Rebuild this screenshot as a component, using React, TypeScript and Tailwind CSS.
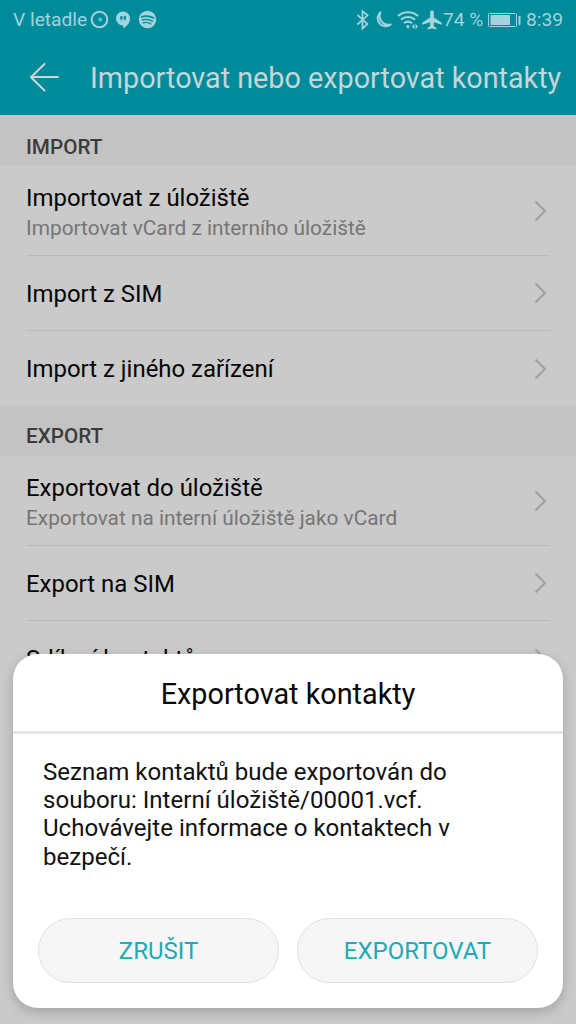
import { ReactNode } from "react";

function Chevron() {
  return (
    <svg className="mr-[2px] h-[22px] w-[14px] shrink-0" viewBox="0 0 14 22" fill="none" stroke="#a0a0a0" strokeWidth="2">
      <path d="M1.5 1.5 11 11 1.5 20.5" />
    </svg>
  );
}

function Section({ children, className }: { children: ReactNode; className: string }) {
  return (
    <h2 className={`shrink-0 bg-[#c3c3c3] pl-[26px] text-[20.7px] leading-[24px] font-medium text-[#3b3b3b] ${className}`}>
      {children}
    </h2>
  );
}

function Row({ title, detail, last }: { title: string; detail?: string; last?: boolean }) {
  return (
    <div
      className={`mx-[26px] flex shrink-0 items-center justify-between ${detail ? "h-[90px]" : "h-[75px]"} ${last ? "" : "border-b border-[#b9b9b9]"}`}
    >
      <div className={`whitespace-nowrap ${detail ? "pt-[4px]" : last ? "" : "pt-[2px]"}`}>
        <div className="text-[23.95px] leading-[30px] text-[#050505]">{title}</div>
        {detail && <div className="text-[20.83px] leading-[30px] text-[#757575]">{detail}</div>}
      </div>
      <Chevron />
    </div>
  );
}

function StatusBar() {
  return (
    <div className="flex h-[40px] items-center justify-between pr-[13px] pl-[13px] text-[19.2px] leading-[40px] whitespace-nowrap text-[#a3d3dc]">
      <div className="flex items-center">
        <span className="w-[77px]">V letadle</span>
        <svg className="h-[20px] w-[68px]" viewBox="0 0 68 20">
          <circle cx="9.5" cy="9.5" r="7.8" fill="none" stroke="currentColor" strokeWidth="2" />
          <circle cx="10.2" cy="9.5" r="2" fill="#52c7da" />
          <path d="M33 1.5a7 7 0 0 0 0 14v2.8c4.5-2.1 7-5.8 7-9.8a7 7 0 0 0-7-7Z" fill="currentColor" />
          <path d="M30.2 6.2h2.3v2.8l-1 1.6h-1l.7-1.7h-1zm3.5 0h2.3v2.8l-1 1.6h-1l.7-1.7h-1z" fill="#008b9b" />
          <circle cx="57.5" cy="9.5" r="8.7" fill="currentColor" />
          <g fill="none" stroke="#008b9b" strokeLinecap="round">
            <path d="M51.6 6.8c4-1.2 8.3-.8 12 1.2" strokeWidth="1.7" />
            <path d="M52.3 9.9c3.5-1 7-.5 10.2 1.2" strokeWidth="1.4" />
            <path d="M52.9 12.8c3-.7 5.8-.3 8.3 1.1" strokeWidth="1.2" />
          </g>
        </svg>
      </div>
      <div className="flex items-center">
        <svg className="h-[24px] w-[88px]" viewBox="0 0 88 24" fill="none" stroke="currentColor" strokeWidth="1.7">
          <path d="m2.5 7 10 9-5 4.5V3l5 4.3-10 9.2" />
          <path d="M25.5 4.2a7.8 7.8 0 1 0 10.2 12.2A8.8 8.8 0 0 1 25.5 4.2Z" strokeWidth="2" strokeLinejoin="round" />
          <path d="M43 8c5.8-5 14.2-5 20 0M46 11.6c4.2-3.5 9.800-3.5 14 0M49 15.100c2.500-1.800 5.500-1.800 8 0" strokeWidth="2.1" />
          <circle cx="52.900" cy="18.700" r="1.600" fill="currentColor" stroke="none" />
          <path d="m59.300 15.800-2.500 2.700 2.500 2.700zm1.200 0 2.500 2.700-2.500 2.700z" fill="currentColor" stroke="none" />
          <path d="M77 2.200c1.100 0 1.900 1 1.900 2.300v5l7.900 5.200v2.100l-7.900-2.600v4l2.600 1.800v1.500l-4.500-1-4.500 1V20l2.600-1.800v-4l-7.900 2.600v-2.100l7.900-5.200v-5c0-1.300.8-2.300 1.900-2.300Z" fill="currentColor" stroke="none" />
        </svg>
        <span className="w-[44px]">74 %</span>
        <svg className="h-[18px] w-[34px]" viewBox="0 0 34 18">
          <rect x="1.5" y="2.500" width="28" height="13" rx="1" fill="none" stroke="currentColor" strokeWidth="1" />
          <path d="M3.500 4H23v10H3.500zM31.500 5h2v9h-2z" fill="currentColor" />
        </svg>
        <span className="pl-[5px]">8:39</span>
      </div>
    </div>
  );
}

export default function App() {
  return (
    <div className="relative flex h-[1024px] w-[576px] flex-col overflow-hidden bg-[#cacaca] font-['Roboto',sans-serif]">
      <header className="h-[115px] shrink-0 bg-[#008b9b]">
        <StatusBar />
        <div className="flex h-[75px] items-center pl-[30px]">
          <svg className="h-[30px] w-[30px] shrink-0" viewBox="0 0 30 30" fill="none" stroke="#cbd5d6" strokeWidth="2" strokeLinecap="round" strokeLinejoin="round">
            <path d="M28 14H1M14.5 1 1 14.2 14.5 27.5" />
          </svg>
          <h1 className="pl-[30px] text-[28.75px] leading-[40px] whitespace-nowrap text-[#c5d5d8]">Importovat nebo exportovat kontakty</h1>
        </div>
      </header>
      <Section className="h-[51px] pt-[20px]">IMPORT</Section>
      <Row title="Importovat z úložiště" detail="Importovat vCard z interního úložiště" />
      <Row title="Import z SIM" />
      <Row title="Import z jiného zařízení" last />
      <Section className="h-[50px] pt-[18px]">EXPORT</Section>
      <Row title="Exportovat do úložiště" detail="Exportovat na interní úložiště jako vCard" />
      <Row title="Export na SIM" />
      <Row title="Sdílení kontaktů" last />

      <div role="dialog" className="absolute top-[654px] left-[13px] flex h-[354px] w-[550px] flex-col rounded-[25px] bg-white shadow-[0_4px_12px_rgba(0,0,0,0.2)]">
        <h2 className="h-[80px] border-b-[3px] border-[#e5e5e5] text-center text-[28.8px] leading-[80px] text-[#080808]">Exportovat kontakty</h2>
        <p className="pt-[24px] pl-[30px] text-[24.05px] leading-[28.2px] whitespace-nowrap text-[#111]">
          Seznam kontaktů bude exportován do<br />
          souboru: Interní úložiště/00001.vcf.<br />
          Uchovávejte informace o kontaktech v<br />
          bezpečí.
        </p>
        <div className="mt-auto mb-[25px] flex justify-between px-[25px] text-[24px] text-[#20aab5]">
          <button className="h-[65px] w-[241px] rounded-full border border-[#e0e0e0] bg-[#f6f6f6]">ZRUŠIT</button>
          <button className="h-[65px] w-[241px] rounded-full border border-[#e0e0e0] bg-[#f6f6f6]">EXPORTOVAT</button>
        </div>
      </div>
    </div>
  );
}
